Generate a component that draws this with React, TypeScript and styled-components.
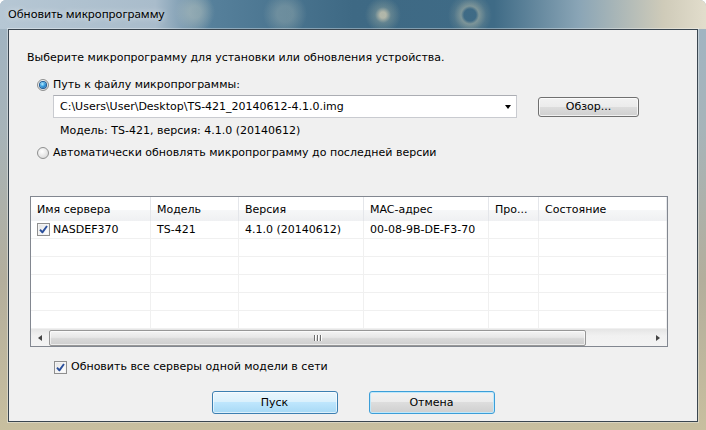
import React from "react";
import styled, { createGlobalStyle, css } from "styled-components";

const GlobalStyle = createGlobalStyle`
  html, body {
    margin: 0;
    padding: 0;
    background: #ffffff;
  }
  body {
    font-family: "DejaVu Sans", "Liberation Sans", sans-serif;
    font-size: 11px;
    color: #000;
  }
  * {
    box-sizing: border-box;
  }
`;

const Window = styled.div`
  width: 706px;
  height: 430px;
  display: flex;
  flex-direction: column;
  border-radius: 6px 6px 0 0;
  overflow: hidden;
  background: linear-gradient(
    180deg,
    #9fb4c4 0%,
    #a7b4b9 30%,
    #b3ae9c 65%,
    #c8bf9f 100%
  );
`;

const TitleBar = styled.div`
  height: 29px;
  flex: none;
  display: flex;
  align-items: center;
  padding: 0 0 2px 8px;
  background:
    radial-gradient(circle at 383px 15px, rgba(225, 215, 185, 0.7) 0 3px, rgba(180, 190, 170, 0.3) 8px, transparent 18px),
    radial-gradient(circle at 470px 15px, transparent 0 6px, rgba(200, 200, 175, 0.45) 9px, rgba(200, 200, 175, 0.12) 16px, transparent 22px),
    radial-gradient(circle at 195px 12px, rgba(190, 200, 190, 0.4) 0 6px, transparent 20px),
    radial-gradient(circle at 285px 14px, rgba(190, 200, 190, 0.3) 0 8px, transparent 22px),
    linear-gradient(
      90deg,
      #b6c7d4 0%,
      #a9bccb 22%,
      #56809b 30%,
      #3e6984 50%,
      #3f6b86 70%,
      #8aa5b6 82%,
      #cfcbb9 94%,
      #e2ddcc 100%
    );
`;

const Title = styled.span`
  font-family: "Noto Sans", "DejaVu Sans", sans-serif;
  font-size: 11.5px;
  color: #000;
  text-shadow: 0 0 6px rgba(255, 255, 255, 0.8);
`;

const Frame = styled.div`
  flex: 1;
  display: flex;
  padding: 0 8px 8px 8px;
`;

const Client = styled.div`
  flex: 1;
  display: flex;
  flex-direction: column;
  background: #f0f0f0;
  border: 1px solid #3a4650;
  box-shadow: 0 0 0 1px rgba(255, 255, 255, 0.35);
  padding: 0 18px;
`;

const Text = styled.div<{ $top: number; $left?: number }>`
  margin-top: ${(p) => p.$top}px;
  margin-left: ${(p) => p.$left ?? 0}px;
  line-height: 14px;
  white-space: nowrap;
`;

const OptionRow = styled.label<{ $top: number; $left: number }>`
  display: flex;
  align-items: center;
  gap: 4px;
  margin-top: ${(p) => p.$top}px;
  margin-left: ${(p) => p.$left}px;
  line-height: 14px;
  white-space: nowrap;
`;

const Radio = styled.span<{ $checked?: boolean }>`
  width: 12px;
  height: 12px;
  border-radius: 50%;
  border: 1px solid #8e8f8f;
  background: radial-gradient(circle at 40% 35%, #ffffff 0%, #e6e6e6 55%, #d3d3d3 100%);
  display: flex;
  align-items: center;
  justify-content: center;
  flex: none;
  ${(p) =>
    p.$checked &&
    css`
      &::after {
        content: "";
        width: 6px;
        height: 6px;
        border-radius: 50%;
        background: radial-gradient(circle at 40% 35%, #b8ecff 0%, #3aa0e0 45%, #114f9a 100%);
        box-shadow: 0 0 0 1px #1c5a94;
      }
    `}
`;

const CheckBox = styled.span`
  width: 13px;
  height: 13px;
  border: 1px solid #8f8f8f;
  background: linear-gradient(135deg, #e2e2e2 0%, #f6f6f6 60%, #ffffff 100%);
  box-shadow: inset 0 0 0 1px #f4f4f4;
  display: flex;
  align-items: center;
  justify-content: center;
  flex: none;
`;

const CheckMark = () => (
  <svg width="9" height="9" viewBox="0 0 9 9">
    <path d="M1 4.6 L3.4 7.4 L8 1" fill="none" stroke="#2a4f9c" strokeWidth="1.9" strokeLinejoin="round" />
  </svg>
);

const PathRow = styled.div`
  display: flex;
  align-items: center;
  margin-top: 3px;
  margin-left: 26px;
`;

const Combo = styled.div`
  width: 464px;
  height: 23px;
  background: #ffffff;
  border: 1px solid #c9cbd0;
  border-top-color: #abadb3;
  display: flex;
  align-items: center;
  padding: 0 0 0 6px;
`;

const ComboText = styled.span`
  flex: 1;
  white-space: nowrap;
`;

const ComboArrow = styled.span`
  width: 17px;
  display: flex;
  justify-content: center;
  &::before {
    content: "";
    border-left: 3.5px solid transparent;
    border-right: 3.5px solid transparent;
    border-top: 4px solid #000;
  }
`;

const Button = styled.div<{ $width: number; $height: number; $hot?: boolean; $focus?: boolean }>`
  width: ${(p) => p.$width}px;
  height: ${(p) => p.$height}px;
  display: flex;
  align-items: center;
  justify-content: center;
  border-radius: 3px;
  border: 1px solid #707070;
  background: linear-gradient(180deg, #f2f2f2 0%, #ebebeb 49%, #dddddd 50%, #cfcfcf 100%);
  box-shadow: inset 0 0 0 1px rgba(255, 255, 255, 0.7);
  flex: none;
  ${(p) =>
    p.$focus &&
    css`
      border-color: #3c9ed8;
      box-shadow: inset 0 0 0 1px #bfe8fb;
    `}
  ${(p) =>
    p.$hot &&
    css`
      border-color: #3c7fb1;
      background: linear-gradient(180deg, #eaf6fd 0%, #d9f0fc 49%, #bee6fd 50%, #a7d9f5 100%);
      box-shadow: inset 0 0 0 1px rgba(255, 255, 255, 0.6);
    `}
`;

const Table = styled.div`
  margin-top: 36px;
  margin-left: 3px;
  width: 638px;
  height: 151px;
  border: 1px solid #828790;
  background: #ffffff;
  display: flex;
  flex-direction: column;
  overflow: hidden;
`;

const columns = "120px 88px 125px 125px 50px 1fr";

const HeaderRow = styled.div`
  display: grid;
  grid-template-columns: ${columns};
  height: 24px;
  flex: none;
  background: linear-gradient(180deg, #ffffff 0%, #ffffff 55%, #f6f7f8 56%, #eff0f2 100%);
`;

const HeaderCell = styled.div`
  display: flex;
  align-items: center;
  padding-left: 6px;
  border-right: 1px solid #e4e6ea;
  white-space: nowrap;
  overflow: hidden;
`;

const Rows = styled.div`
  flex: 1;
  overflow: hidden;
`;

const Row = styled.div`
  display: grid;
  grid-template-columns: ${columns};
  height: 18px;
  border-bottom: 1px solid #f0f0f0;
`;

const Cell = styled.div`
  display: flex;
  align-items: center;
  gap: 3px;
  padding-left: 6px;
  border-right: 1px solid #f0f0f0;
  white-space: nowrap;
`;

const HScroll = styled.div`
  height: 17px;
  flex: none;
  display: flex;
  align-items: center;
  background: linear-gradient(180deg, #e5e5e5 0%, #f1f1f1 40%, #f3f3f3 100%);
`;

const ScrollArrow = styled.span<{ $dir: "left" | "right" }>`
  width: 18px;
  height: 17px;
  display: flex;
  align-items: center;
  justify-content: center;
  flex: none;
  &::before {
    content: "";
    border-top: 3.5px solid transparent;
    border-bottom: 3.5px solid transparent;
    ${(p) =>
      p.$dir === "left"
        ? css`
            border-right: 4px solid #444;
          `
        : css`
            border-left: 4px solid #444;
          `}
  }
`;

const Thumb = styled.div`
  width: 537px;
  height: 16px;
  border: 1px solid #979797;
  border-radius: 2px;
  background: linear-gradient(180deg, #f4f4f4 0%, #e7e7e7 45%, #d8d8d8 55%, #cfcfcf 100%);
  box-shadow: inset 0 0 0 1px rgba(255, 255, 255, 0.6);
  display: flex;
  align-items: center;
  justify-content: center;
  gap: 2px;
`;

const Grip = styled.span`
  width: 1px;
  height: 6px;
  background: #6d6d6d;
  box-shadow: 1px 0 0 #ffffff;
`;

const Track = styled.div`
  flex: 1;
`;

const ButtonRow = styled.div`
  display: flex;
  justify-content: center;
  gap: 31px;
  margin-top: 17px;
`;

const headers = ["Имя сервера", "Модель", "Версия", "MAC-адрес", "Про...", "Состояние"];

export default function App() {
  return (
    <>
      <GlobalStyle />
      <Window>
        <TitleBar>
          <Title>Обновить микропрограмму</Title>
        </TitleBar>
        <Frame>
          <Client>
            <Text $top={21}>Выберите микропрограмму для установки или обновления устройства.</Text>

            <OptionRow $top={13} $left={10}>
              <Radio $checked />
              Путь к файлу микропрограммы:
            </OptionRow>

            <PathRow>
              <Combo>
                <ComboText>C:\Users\User\Desktop\TS-421_20140612-4.1.0.img</ComboText>
                <ComboArrow />
              </Combo>
              <Button $width={101} $height={20} style={{ marginLeft: 21 }}>
                Обзор...
              </Button>
            </PathRow>

            <Text $top={6} $left={33}>
              Модель: TS-421, версия: 4.1.0 (20140612)
            </Text>

            <OptionRow $top={8} $left={10}>
              <Radio />
              Автоматически обновлять микропрограмму до последней версии
            </OptionRow>

            <Table>
              <HeaderRow>
                {headers.map((h) => (
                  <HeaderCell key={h}>{h}</HeaderCell>
                ))}
              </HeaderRow>
              <Rows>
                <Row>
                  <Cell>
                    <CheckBox>
                      <CheckMark />
                    </CheckBox>
                    NASDEF370
                  </Cell>
                  <Cell>TS-421</Cell>
                  <Cell>4.1.0 (20140612)</Cell>
                  <Cell>00-08-9B-DE-F3-70</Cell>
                  <Cell />
                  <Cell />
                </Row>
                {[0, 1, 2, 3, 4].map((i) => (
                  <Row key={i}>
                    {headers.map((h) => (
                      <Cell key={h} />
                    ))}
                  </Row>
                ))}
              </Rows>
              <HScroll>
                <ScrollArrow $dir="left" />
                <Thumb>
                  <Grip />
                  <Grip />
                  <Grip />
                </Thumb>
                <Track />
                <ScrollArrow $dir="right" />
              </HScroll>
            </Table>

            <OptionRow $top={13} $left={27}>
              <CheckBox>
                <CheckMark />
              </CheckBox>
              Обновить все серверы одной модели в сети
            </OptionRow>

            <ButtonRow>
              <Button $width={126} $height={23} $hot>
                Пуск
              </Button>
              <Button $width={126} $height={23} $focus>
                Отмена
              </Button>
            </ButtonRow>
          </Client>
        </Frame>
      </Window>
    </>
  );
}
